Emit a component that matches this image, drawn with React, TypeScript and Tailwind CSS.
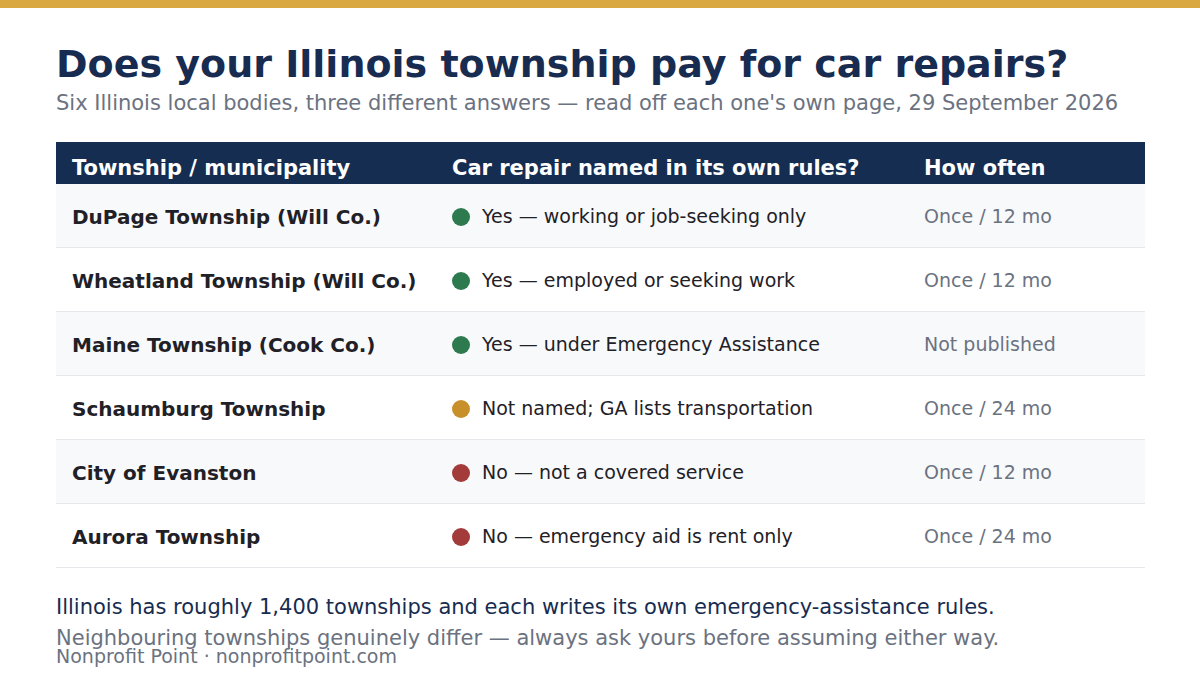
import React from "react";

const rows = [
  { name: "DuPage Township (Will Co.)", dot: "bg-[#2e7a4f]", answer: "Yes — working or job-seeking only", often: "Once / 12 mo" },
  { name: "Wheatland Township (Will Co.)", dot: "bg-[#2e7a4f]", answer: "Yes — employed or seeking work", often: "Once / 12 mo" },
  { name: "Maine Township (Cook Co.)", dot: "bg-[#2e7a4f]", answer: "Yes — under Emergency Assistance", often: "Not published" },
  { name: "Schaumburg Township", dot: "bg-[#c8902a]", answer: "Not named; GA lists transportation", often: "Once / 24 mo" },
  { name: "City of Evanston", dot: "bg-[#a33b3a]", answer: "No — not a covered service", often: "Once / 12 mo" },
  { name: "Aurora Township", dot: "bg-[#a33b3a]", answer: "No — emergency aid is rent only", often: "Once / 24 mo" },
];

export default function App() {
  return (
    <div className="w-[1200px] h-[674px] bg-white overflow-hidden font-['DejaVu_Sans',sans-serif]">
      <div className="h-2 bg-[#d9a843]" />
      <div className="px-14 pt-[33px]">
        <h1 className="text-[38px] leading-[46px] font-bold text-[#172c50]">Does your Illinois township pay for car repairs?</h1>
        <p className="text-[21px] leading-[26px] text-[#6b7280] mt-[3px]">
          Six Illinois local bodies, three different answers — read off each one's own page, 29 September 2026
        </p>

        <div className="mt-[26px] w-[1089px]">
          <div className="flex h-[42px] bg-[#162d52] text-white text-[21px] font-bold items-center pt-[12px]">
            <div className="w-[380px] pl-4">Township / municipality</div>
            <div className="w-[472px] pl-4">Car repair named in its own rules?</div>
            <div className="flex-1 pl-4">How often</div>
          </div>
          {rows.map((r, i) => (
            <div
              key={r.name}
              className={`flex h-[64px] items-center pt-[2px] border-b border-[#e5e7eb] ${i % 2 === 0 ? "bg-[#f8f9fb]" : "bg-white"}`}
            >
              <div className="w-[380px] pl-4 text-[20px] font-bold text-[#1f2127]">{r.name}</div>
              <div className="w-[472px] pl-4 flex items-center gap-3 text-[19px] text-[#1f2127]">
                <span className={`w-[18px] h-[18px] rounded-full shrink-0 ${r.dot}`} />
                <span>{r.answer}</span>
              </div>
              <div className="flex-1 pl-4 text-[19px] text-[#6b7280]">{r.often}</div>
            </div>
          ))}
        </div>

        <p className="mt-[27px] text-[21px] leading-[24px] text-[#172c50]">
          Illinois has roughly 1,400 townships and each writes its own emergency-assistance rules.
        </p>
        <p className="mt-[7px] text-[21px] leading-[24px] text-[#6b7280]">
          Neighbouring townships genuinely differ — always ask yours before assuming either way.
        </p>
        <p className="mt-[-5px] text-[19px] leading-[22px] text-[#6b7280]">Nonprofit Point · nonprofitpoint.com</p>
      </div>
    </div>
  );
}
